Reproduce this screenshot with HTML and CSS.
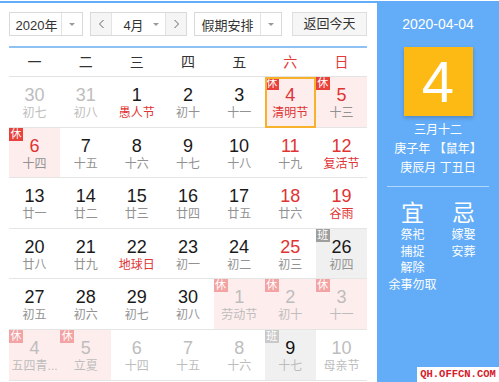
FILE: index.html
```html
<!DOCTYPE html>
<html lang="zh-CN">
<head>
    <meta charset="UTF-8">
    <title>万年历</title>
    <link rel="stylesheet" href="styles.css">
</head>
<body>
    <div class="calendar">
        <div class="main">
            <div class="toolbar">
                <div class="select year-select">
                    <span class="select-text">2020年</span>
                    <span class="select-arrow"></span>
                </div>
                <div class="select month-select">
                    <span class="nav">
                        <svg width="7" height="10" viewBox="0 0 7 10"><polyline points="5.5,1 1.5,5 5.5,9" fill="none" stroke="#666" stroke-width="1"/></svg>
                    </span>
                    <span class="select-text">4月</span>
                    <span class="select-arrow plain"></span>
                    <span class="nav nav-next">
                        <svg width="7" height="10" viewBox="0 0 7 10"><polyline points="1.5,1 5.5,5 1.5,9" fill="none" stroke="#666" stroke-width="1"/></svg>
                    </span>
                </div>
                <div class="select holiday-select">
                    <span class="select-text">假期安排</span>
                    <span class="select-arrow"></span>
                </div>
                <div class="today-btn">返回今天</div>
            </div>

            <div class="weekdays">
                <span>一</span><span>二</span><span>三</span><span>四</span><span>五</span>
                <span class="red">六</span><span class="red">日</span>
            </div>

            <div class="days">
                <!-- row 1 -->
                <div class="day other"><b>30</b><i>初七</i></div>
                <div class="day other"><b>31</b><i>初八</i></div>
                <div class="day fest"><b>1</b><i>愚人节</i></div>
                <div class="day"><b>2</b><i>初十</i></div>
                <div class="day"><b>3</b><i>十一</i></div>
                <div class="day rest weekend fest today"><span class="tag">休</span><b>4</b><i>清明节</i></div>
                <div class="day rest weekend"><span class="tag">休</span><b>5</b><i>十三</i></div>
                <!-- row 2 -->
                <div class="day rest weekend"><span class="tag">休</span><b>6</b><i>十四</i></div>
                <div class="day"><b>7</b><i>十五</i></div>
                <div class="day"><b>8</b><i>十六</i></div>
                <div class="day"><b>9</b><i>十七</i></div>
                <div class="day"><b>10</b><i>十八</i></div>
                <div class="day weekend"><b>11</b><i>十九</i></div>
                <div class="day weekend fest"><b>12</b><i>复活节</i></div>
                <!-- row 3 -->
                <div class="day"><b>13</b><i>廿一</i></div>
                <div class="day"><b>14</b><i>廿二</i></div>
                <div class="day"><b>15</b><i>廿三</i></div>
                <div class="day"><b>16</b><i>廿四</i></div>
                <div class="day"><b>17</b><i>廿五</i></div>
                <div class="day weekend"><b>18</b><i>廿六</i></div>
                <div class="day weekend fest"><b>19</b><i>谷雨</i></div>
                <!-- row 4 -->
                <div class="day"><b>20</b><i>廿八</i></div>
                <div class="day"><b>21</b><i>廿九</i></div>
                <div class="day fest"><b>22</b><i>地球日</i></div>
                <div class="day"><b>23</b><i>初一</i></div>
                <div class="day"><b>24</b><i>初二</i></div>
                <div class="day weekend"><b>25</b><i>初三</i></div>
                <div class="day work"><span class="tag tag-work">班</span><b>26</b><i>初四</i></div>
                <!-- row 5 -->
                <div class="day"><b>27</b><i>初五</i></div>
                <div class="day"><b>28</b><i>初六</i></div>
                <div class="day"><b>29</b><i>初七</i></div>
                <div class="day"><b>30</b><i>初八</i></div>
                <div class="day other rest"><span class="tag">休</span><b>1</b><i>劳动节</i></div>
                <div class="day other rest"><span class="tag">休</span><b>2</b><i>初十</i></div>
                <div class="day other rest"><span class="tag">休</span><b>3</b><i>十一</i></div>
                <!-- row 6 -->
                <div class="day other rest"><span class="tag">休</span><b>4</b><i title="五四青年节">五四青...</i></div>
                <div class="day other rest"><span class="tag">休</span><b>5</b><i>立夏</i></div>
                <div class="day other"><b>6</b><i>十四</i></div>
                <div class="day other"><b>7</b><i>十五</i></div>
                <div class="day other"><b>8</b><i>十六</i></div>
                <div class="day other work hover"><span class="tag tag-work">班</span><b>9</b><i>十七</i></div>
                <div class="day other"><b>10</b><i>母亲节</i></div>
            </div>
        </div>

        <div class="side">
            <div class="side-date">2020-04-04</div>
            <div class="side-day">4</div>
            <div class="side-lunar">
                <p>三月十二</p>
                <p>庚子年 【鼠年】</p>
                <p>庚辰月 丁丑日</p>
            </div>
            <div class="side-line"></div>
            <div class="almanac">
                <div class="almanac-col">
                    <h3>宜</h3>
                    <p>祭祀</p>
                    <p>捕捉</p>
                    <p>解除</p>
                    <p>余事勿取</p>
                </div>
                <div class="almanac-col">
                    <h3>忌</h3>
                    <p>嫁娶</p>
                    <p>安葬</p>
                </div>
            </div>
        </div>

        <div class="watermark">QH.OFFCN.COM</div>
    </div>
</body>
</html>
```

FILE: styles.css
```css
body {
    margin: 0;
    padding: 0;
    font-family: "Liberation Sans", "Noto Sans CJK SC", sans-serif;
    background: #fff;
}

.calendar {
    position: relative;
    display: flex;
    width: 499px;
    height: 381px;
    margin-top: 1px;
    border-top: 2px solid #63acf7;
    box-sizing: border-box;
    overflow: hidden;
}

.main {
    width: 377px;
    padding: 9px 10px 0 9px;
    box-sizing: border-box;
}

/* toolbar */
.toolbar {
    display: flex;
    height: 24px;
}

.select {
    display: flex;
    align-items: center;
    height: 24px;
    border: 1px solid #d9d9d9;
    box-sizing: border-box;
    font-size: 13px;
    color: #333;
}

.select-text {
    flex: 1;
    text-align: center;
}

.select-arrow {
    position: relative;
    width: 20px;
    height: 22px;
    border-left: 1px solid #e3e3e3;
}

.select-arrow::after {
    content: "";
    position: absolute;
    left: 7px;
    top: 10px;
    border-left: 3px solid transparent;
    border-right: 3px solid transparent;
    border-top: 3px solid #999;
}

.select-arrow.plain {
    border-left: none;
    width: 16px;
}

.select-arrow.plain::after {
    left: 4px;
}

.year-select {
    width: 74px;
}

.year-select .select-text {
    padding-left: 2px;
}

.month-select {
    width: 97px;
    margin-left: 7px;
}

.month-select .select-text {
    padding-left: 6px;
}

.nav {
    display: flex;
    align-items: center;
    justify-content: center;
    width: 20px;
    height: 22px;
    background: #f5f5f5;
    border-right: 1px solid #e3e3e3;
}

.nav-next {
    border-right: none;
    border-left: 1px solid #e3e3e3;
}

.holiday-select {
    width: 88px;
    margin-left: 7px;
}

.today-btn {
    width: 75px;
    height: 24px;
    margin-left: 10px;
    line-height: 22px;
    text-align: center;
    font-size: 13px;
    color: #333;
    background: #f6f6f6;
    border: 1px solid #dedede;
    box-sizing: border-box;
}

/* weekdays */
.weekdays {
    display: grid;
    grid-template-columns: repeat(7, 1fr);
    margin-top: 10px;
    height: 31px;
    border-top: 2px solid #8fc2f3;
    border-bottom: 1px solid #e3e3e3;
    box-sizing: border-box;
    font-size: 14px;
    color: #333;
    line-height: 28px;
    text-align: center;
}

.weekdays .red {
    color: #e33b3b;
}

/* days */
.days {
    display: grid;
    grid-template-columns: repeat(7, 1fr);
}

.day {
    position: relative;
    height: 50.6px;
    border-bottom: 1px solid #e5e5e5;
    box-sizing: border-box;
    text-align: center;
    overflow: hidden;
}

.day b {
    display: block;
    margin-top: 8px;
    font-weight: normal;
    font-size: 18px;
    line-height: 20px;
    color: #1a1a1a;
}

.day i {
    display: block;
    font-style: normal;
    font-size: 12px;
    line-height: 16px;
    color: #929292;
    white-space: nowrap;
}

.day.weekend b {
    color: #e03434;
}

.day.fest i {
    color: #e03434;
}

.day.rest {
    background: #fdeded;
}

.day.work {
    background: #f0f0f0;
}

.day.today {
    border: 2px solid #f7b12b;
}

.day.today b {
    margin-top: 6px;
}

.day.other b,
.day.other i {
    color: #bdbdbd;
}

.day.other.hover b {
    color: #111;
}

.tag {
    position: absolute;
    left: 0;
    top: 0;
    width: 14px;
    height: 13px;
    font-size: 11px;
    line-height: 13px;
    text-align: center;
    color: #fff;
    background: #e8403b;
}

.today .tag {
    left: -2px;
    top: -2px;
}

.tag-work {
    background: #9e9e9e;
}

.other .tag {
    background: #f3a3a3;
}

.other .tag-work {
    background: #c9c9c9;
}

/* side panel */
.side {
    width: 122px;
    padding: 0 10px;
    box-sizing: border-box;
    background: #63acf7;
    color: #fff;
    text-align: center;
}

.side-date {
    margin-top: 11px;
    font-size: 14px;
    line-height: 20px;
}

.side-day {
    width: 69px;
    height: 69px;
    margin: 13px auto 0;
    background: #fdb914;
    box-shadow: 0 2px 4px rgba(0, 0, 0, 0.2);
    font-size: 58px;
    line-height: 69px;
}

.side-lunar {
    margin-top: 5px;
    font-size: 12px;
    line-height: 19px;
}

.side-lunar p {
    margin: 0;
}

.side-line {
    margin-top: 8px;
    height: 1px;
    background: rgba(255, 255, 255, 0.5);
}

.almanac {
    display: grid;
    grid-template-columns: 1fr 1fr;
    margin-top: 12px;
}

.almanac-col h3 {
    margin: 0;
    font-weight: normal;
    font-size: 23px;
    line-height: 28px;
}

.almanac-col p {
    margin: 0;
    font-size: 12px;
    line-height: 16.5px;
    white-space: nowrap;
}

.watermark {
    position: absolute;
    right: 0;
    bottom: 0;
    width: 82px;
    height: 15px;
    background: #fff;
    color: #d4202a;
    font-family: "Liberation Mono", monospace;
    font-weight: bold;
    font-size: 10.5px;
    line-height: 15px;
    text-align: center;
}
```
